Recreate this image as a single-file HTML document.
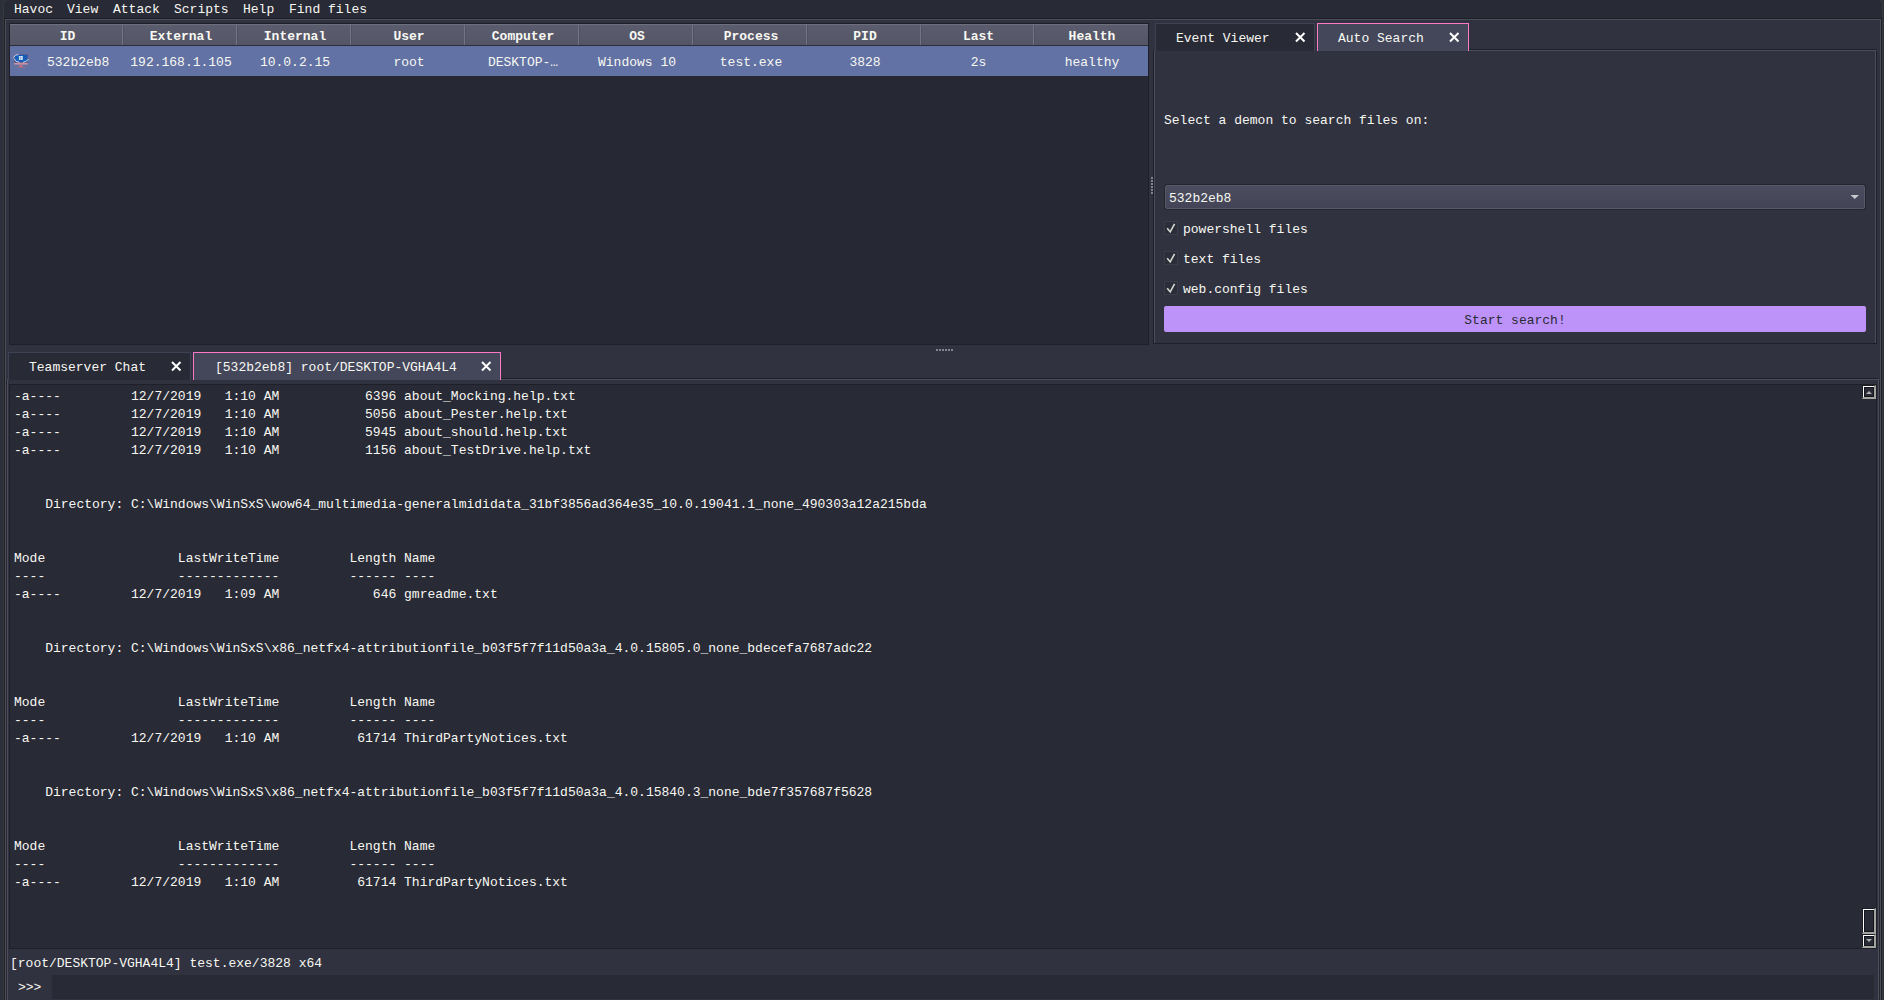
<!DOCTYPE html>
<html><head><meta charset="utf-8"><style>
html,body{margin:0;padding:0}
body{width:1884px;height:1000px;overflow:hidden;position:relative;background:#30323f}
body div{position:absolute}
.t{font-family:"Liberation Mono",monospace;font-size:13px;line-height:18px;white-space:pre}
</style></head><body>
<div style="left:0px;top:0px;width:3px;height:1000px;background:#2b303b;"></div>
<div style="left:1883px;top:0px;width:1px;height:1000px;background:#2b303b;"></div>
<div style="left:3px;top:0px;width:6px;height:6px;background:#2b303b;"></div>
<div style="left:1877px;top:0px;width:6px;height:6px;background:#2b303b;"></div>
<div style="left:3px;top:-1px;width:1880px;height:19px;background:#282a36;box-sizing:border-box;border:1px solid #36383e;border-bottom:none;border-radius:6px 6px 0 0"></div>
<div style="left:3px;top:18px;width:1px;height:982px;background:#36383e;"></div>
<div style="left:1882px;top:18px;width:1px;height:982px;background:#38393e;"></div>
<div style="left:4px;top:19px;width:1px;height:981px;background:#1f2028;"></div>
<div style="left:1881px;top:19px;width:1px;height:981px;background:#1f2028;"></div>
<div style="left:4px;top:18px;width:1878px;height:1px;background:#1d1e26;"></div>
<div class="t" style="left:14px;top:1px;color:#f8f8f2;">Havoc</div>
<div class="t" style="left:67px;top:1px;color:#f8f8f2;">View</div>
<div class="t" style="left:113px;top:1px;color:#f8f8f2;">Attack</div>
<div class="t" style="left:174px;top:1px;color:#f8f8f2;">Scripts</div>
<div class="t" style="left:243px;top:1px;color:#f8f8f2;">Help</div>
<div class="t" style="left:289px;top:1px;color:#f8f8f2;">Find files</div>
<div style="left:5px;top:19px;width:1876px;height:1px;background:#4c4d5b;"></div>
<div style="left:5px;top:19px;width:1px;height:981px;background:#4c4d5b;"></div>
<div style="left:1880px;top:19px;width:1px;height:981px;background:#4c4d5b;"></div>
<div style="left:9px;top:23px;width:1140px;height:322px;background:#1e1f28;"></div>
<div style="left:10px;top:24px;width:1138px;height:320px;background:#262833;"></div>
<div style="left:10px;top:24px;width:1138px;height:1px;background:#6e6f7d;"></div>
<div style="left:10px;top:25px;width:1138px;height:20px;background:linear-gradient(#5b5c6d,#545567);"></div>
<div style="left:10px;top:45px;width:1138px;height:1px;background:#2d2e3a;"></div>
<div style="left:122px;top:25px;width:1px;height:20px;background:#747584;"></div>
<div style="left:123px;top:25px;width:1px;height:20px;background:#4f5061;"></div>
<div style="left:236px;top:25px;width:1px;height:20px;background:#747584;"></div>
<div style="left:237px;top:25px;width:1px;height:20px;background:#4f5061;"></div>
<div style="left:350px;top:25px;width:1px;height:20px;background:#747584;"></div>
<div style="left:351px;top:25px;width:1px;height:20px;background:#4f5061;"></div>
<div style="left:464px;top:25px;width:1px;height:20px;background:#747584;"></div>
<div style="left:465px;top:25px;width:1px;height:20px;background:#4f5061;"></div>
<div style="left:578px;top:25px;width:1px;height:20px;background:#747584;"></div>
<div style="left:579px;top:25px;width:1px;height:20px;background:#4f5061;"></div>
<div style="left:692px;top:25px;width:1px;height:20px;background:#747584;"></div>
<div style="left:693px;top:25px;width:1px;height:20px;background:#4f5061;"></div>
<div style="left:806px;top:25px;width:1px;height:20px;background:#747584;"></div>
<div style="left:807px;top:25px;width:1px;height:20px;background:#4f5061;"></div>
<div style="left:920px;top:25px;width:1px;height:20px;background:#747584;"></div>
<div style="left:921px;top:25px;width:1px;height:20px;background:#4f5061;"></div>
<div style="left:1033px;top:25px;width:1px;height:20px;background:#747584;"></div>
<div style="left:1034px;top:25px;width:1px;height:20px;background:#4f5061;"></div>
<div style="left:10px;top:46px;width:1138px;height:30px;background:#6272a4;"></div>
<div class="t" style="left:11px;top:28px;width:113px;text-align:center;color:#f8f8f2;font-weight:bold">ID</div>
<div class="t" style="left:47px;top:54px;color:#f8f8f2;">532b2eb8</div>
<div class="t" style="left:124px;top:28px;width:114px;text-align:center;color:#f8f8f2;font-weight:bold">External</div>
<div class="t" style="left:124px;top:54px;width:114px;text-align:center;color:#f8f8f2;">192.168.1.105</div>
<div class="t" style="left:238px;top:28px;width:114px;text-align:center;color:#f8f8f2;font-weight:bold">Internal</div>
<div class="t" style="left:238px;top:54px;width:114px;text-align:center;color:#f8f8f2;">10.0.2.15</div>
<div class="t" style="left:352px;top:28px;width:114px;text-align:center;color:#f8f8f2;font-weight:bold">User</div>
<div class="t" style="left:352px;top:54px;width:114px;text-align:center;color:#f8f8f2;">root</div>
<div class="t" style="left:466px;top:28px;width:114px;text-align:center;color:#f8f8f2;font-weight:bold">Computer</div>
<div class="t" style="left:466px;top:54px;width:114px;text-align:center;color:#f8f8f2;">DESKTOP-…</div>
<div class="t" style="left:580px;top:28px;width:114px;text-align:center;color:#f8f8f2;font-weight:bold">OS</div>
<div class="t" style="left:580px;top:54px;width:114px;text-align:center;color:#f8f8f2;">Windows 10</div>
<div class="t" style="left:694px;top:28px;width:114px;text-align:center;color:#f8f8f2;font-weight:bold">Process</div>
<div class="t" style="left:694px;top:54px;width:114px;text-align:center;color:#f8f8f2;">test.exe</div>
<div class="t" style="left:808px;top:28px;width:114px;text-align:center;color:#f8f8f2;font-weight:bold">PID</div>
<div class="t" style="left:808px;top:54px;width:114px;text-align:center;color:#f8f8f2;">3828</div>
<div class="t" style="left:922px;top:28px;width:113px;text-align:center;color:#f8f8f2;font-weight:bold">Last</div>
<div class="t" style="left:922px;top:54px;width:113px;text-align:center;color:#f8f8f2;">2s</div>
<div class="t" style="left:1035px;top:28px;width:114px;text-align:center;color:#f8f8f2;font-weight:bold">Health</div>
<div class="t" style="left:1035px;top:54px;width:114px;text-align:center;color:#f8f8f2;">healthy</div>
<svg style="position:absolute;left:13px;top:53px" width="17" height="16" viewBox="0 0 17 16">
<rect x="1.3" y="1.3" width="13.6" height="8" fill="#175cb6" stroke="#8a5a78" stroke-width="0.5"/>
<rect x="5.9" y="3" width="1.8" height="1.8" fill="#dcecf8"/><rect x="8" y="3" width="1.8" height="1.8" fill="#dcecf8"/>
<rect x="5.9" y="5.1" width="1.8" height="1.8" fill="#dcecf8"/><rect x="8" y="5.1" width="1.8" height="1.8" fill="#dcecf8"/>
<path d="M0.6 4.6 Q1.5 1.2 5.5 1.6 M1.2 5.6 Q2.2 9 6.5 9.3 M10 9.4 Q13 8.6 15.6 6.4" stroke="#eef4ff" stroke-width="0.8" fill="none"/>
<rect x="1.2" y="10" width="13.6" height="1.6" fill="#c9919f"/>
<rect x="6.3" y="12.2" width="3.3" height="1.8" fill="#c27282"/>
<rect x="4" y="14.2" width="8.8" height="0.7" fill="#a86a80"/>
</svg>
<div style="left:1151px;top:177px;width:2px;height:2px;background:#84838f;"></div>
<div style="left:1151px;top:180px;width:2px;height:2px;background:#84838f;"></div>
<div style="left:1151px;top:183px;width:2px;height:2px;background:#84838f;"></div>
<div style="left:1151px;top:186px;width:2px;height:2px;background:#84838f;"></div>
<div style="left:1151px;top:189px;width:2px;height:2px;background:#84838f;"></div>
<div style="left:1151px;top:192px;width:2px;height:2px;background:#84838f;"></div>
<div style="left:1469px;top:49px;width:408px;height:1px;background:#1e1f28;"></div>
<div style="left:1469px;top:50px;width:407px;height:1px;background:#4c4d5b;"></div>
<div style="left:1153px;top:51px;width:1px;height:293px;background:#1e1f28;"></div>
<div style="left:1154px;top:51px;width:1px;height:292px;background:#4c4d5b;"></div>
<div style="left:1875px;top:51px;width:1px;height:292px;background:#4c4d5b;"></div>
<div style="left:1876px;top:51px;width:1px;height:293px;background:#1e1f28;"></div>
<div style="left:1153px;top:343px;width:724px;height:1px;background:#1e1f28;"></div>
<div style="left:1155px;top:23px;width:160px;height:28px;background:#3e4053;"></div>
<div style="left:1156px;top:24px;width:158px;height:27px;background:#282a36;"></div>
<div style="left:1317px;top:23px;width:152px;height:28px;background:#ff79c6;"></div>
<div style="left:1318px;top:24px;width:150px;height:27px;background:#44475a;"></div>
<div class="t" style="left:1176px;top:30px;color:#f8f8f2;">Event Viewer</div>
<div class="t" style="left:1338px;top:30px;color:#f8f8f2;">Auto Search</div>
<svg style="position:absolute;left:1295px;top:32px" width="11" height="11" viewBox="0 0 11 11"><path d="M1 1L9.5 9.5M9.5 1L1 9.5" stroke="#ffffff" stroke-width="2"/></svg>
<svg style="position:absolute;left:1449px;top:32px" width="11" height="11" viewBox="0 0 11 11"><path d="M1 1L9.5 9.5M9.5 1L1 9.5" stroke="#ffffff" stroke-width="2"/></svg>
<div class="t" style="left:1164px;top:112px;color:#f8f8f2;">Select a demon to search files on:</div>
<div style="left:1164px;top:184px;width:702px;height:26px;box-sizing:border-box;border:1px solid #24252e;border-radius:3px;background:#24252e"><div style="left:0;top:0;right:0;bottom:0;border:1px solid #575969;border-radius:2px;background:linear-gradient(#4b4d5e,#434556)"></div></div>
<div class="t" style="left:1169px;top:190px;color:#f8f8f2;">532b2eb8</div>
<svg style="position:absolute;left:1850px;top:194px" width="10" height="6" viewBox="0 0 10 6"><path d="M0.5 1L9 1L4.75 5Z" fill="#c8c8cc"/></svg>
<svg style="position:absolute;left:1164px;top:221px" width="14" height="14" viewBox="0 0 14 14"><rect x="0.5" y="0.5" width="13" height="13" fill="#2b2d39" stroke="#3a3c49"/><path d="M3.2 7.2L6.2 10.9L10.6 2.8" stroke="#d6d6d0" stroke-width="1.6" fill="none"/></svg>
<div class="t" style="left:1183px;top:221px;color:#f8f8f2;">powershell files</div>
<svg style="position:absolute;left:1164px;top:251px" width="14" height="14" viewBox="0 0 14 14"><rect x="0.5" y="0.5" width="13" height="13" fill="#2b2d39" stroke="#3a3c49"/><path d="M3.2 7.2L6.2 10.9L10.6 2.8" stroke="#d6d6d0" stroke-width="1.6" fill="none"/></svg>
<div class="t" style="left:1183px;top:251px;color:#f8f8f2;">text files</div>
<svg style="position:absolute;left:1164px;top:281px" width="14" height="14" viewBox="0 0 14 14"><rect x="0.5" y="0.5" width="13" height="13" fill="#2b2d39" stroke="#3a3c49"/><path d="M3.2 7.2L6.2 10.9L10.6 2.8" stroke="#d6d6d0" stroke-width="1.6" fill="none"/></svg>
<div class="t" style="left:1183px;top:281px;color:#f8f8f2;">web.config files</div>
<div style="left:1164px;top:306px;width:702px;height:26px;background:#bd93f9;border-radius:2px"></div>
<div class="t" style="left:1164px;top:312px;width:702px;text-align:center;color:#282a36;">Start search!</div>
<div style="left:936px;top:349px;width:2px;height:2px;background:#84838f;"></div>
<div style="left:939px;top:349px;width:2px;height:2px;background:#84838f;"></div>
<div style="left:942px;top:349px;width:2px;height:2px;background:#84838f;"></div>
<div style="left:945px;top:349px;width:2px;height:2px;background:#84838f;"></div>
<div style="left:948px;top:349px;width:2px;height:2px;background:#84838f;"></div>
<div style="left:951px;top:349px;width:2px;height:2px;background:#84838f;"></div>
<div style="left:501px;top:378px;width:1377px;height:1px;background:#1e1f28;"></div>
<div style="left:501px;top:379px;width:1378px;height:1px;background:#4c4d5b;"></div>
<div style="left:7px;top:379px;width:1px;height:1px;background:#4c4d5b;"></div>
<div style="left:7px;top:380px;width:1px;height:620px;background:#4c4d5b;"></div>
<div style="left:6px;top:380px;width:1px;height:620px;background:#25262e;"></div>
<div style="left:1878px;top:380px;width:1px;height:620px;background:#4c4d5b;"></div>
<div style="left:1879px;top:380px;width:1px;height:620px;background:#25262e;"></div>
<div style="left:8px;top:352px;width:183px;height:28px;background:#3e4053;"></div>
<div style="left:9px;top:353px;width:181px;height:27px;background:#282a36;"></div>
<div style="left:193px;top:352px;width:308px;height:28px;background:#ff79c6;"></div>
<div style="left:194px;top:353px;width:306px;height:27px;background:#44475a;"></div>
<div class="t" style="left:29px;top:359px;color:#f8f8f2;">Teamserver Chat</div>
<div class="t" style="left:215px;top:359px;color:#f8f8f2;">[532b2eb8] root/DESKTOP-VGHA4L4</div>
<svg style="position:absolute;left:171px;top:361px" width="11" height="11" viewBox="0 0 11 11"><path d="M1 1L9.5 9.5M9.5 1L1 9.5" stroke="#ffffff" stroke-width="2"/></svg>
<svg style="position:absolute;left:481px;top:361px" width="11" height="11" viewBox="0 0 11 11"><path d="M1 1L9.5 9.5M9.5 1L1 9.5" stroke="#ffffff" stroke-width="2"/></svg>
<div style="left:9px;top:384px;width:1868px;height:565px;background:#1e1f28;"></div>
<div style="left:10px;top:385px;width:1866px;height:563px;background:#282a36;"></div>
<div class="t" style="left:14px;top:388px;color:#f8f8f2">-a----         12/7/2019   1:10 AM           6396 about_Mocking.help.txt
-a----         12/7/2019   1:10 AM           5056 about_Pester.help.txt
-a----         12/7/2019   1:10 AM           5945 about_should.help.txt
-a----         12/7/2019   1:10 AM           1156 about_TestDrive.help.txt


    Directory: C:\Windows\WinSxS\wow64_multimedia-generalmididata_31bf3856ad364e35_10.0.19041.1_none_490303a12a215bda


Mode                 LastWriteTime         Length Name
----                 -------------         ------ ----
-a----         12/7/2019   1:09 AM            646 gmreadme.txt


    Directory: C:\Windows\WinSxS\x86_netfx4-attributionfile_b03f5f7f11d50a3a_4.0.15805.0_none_bdecefa7687adc22


Mode                 LastWriteTime         Length Name
----                 -------------         ------ ----
-a----         12/7/2019   1:10 AM          61714 ThirdPartyNotices.txt


    Directory: C:\Windows\WinSxS\x86_netfx4-attributionfile_b03f5f7f11d50a3a_4.0.15840.3_none_bde7f357687f5628


Mode                 LastWriteTime         Length Name
----                 -------------         ------ ----
-a----         12/7/2019   1:10 AM          61714 ThirdPartyNotices.txt</div>
<div style="left:1862px;top:385px;width:14px;height:14px;box-sizing:border-box;border-style:solid;border-width:1px 2px 2px 1px;border-color:#1a1b24 #a3a39f #a3a39f #1a1b24;background:#282a36"><div style="left:0;top:0;right:0;bottom:0;border-style:solid;border-width:1px 0 0 1px;border-color:#ffffff"><div style="left:0;top:0;right:0;bottom:0;border:1px solid #14151e"></div></div></div>
<svg style="position:absolute;left:1866px;top:391px" width="6" height="4" viewBox="0 0 6 4"><path d="M0 3L3 0L6 3Z" fill="#aeaeaa"/></svg>
<div style="left:1862px;top:908px;width:14px;height:26px;box-sizing:border-box;border-style:solid;border-width:1px 2px 2px 1px;border-color:#1a1b24 #a3a39f #a3a39f #1a1b24;background:#282a36"><div style="left:0;top:0;right:0;bottom:0;border-style:solid;border-width:1px 0 0 1px;border-color:#ffffff"><div style="left:0;top:0;right:0;bottom:0;border:1px solid #14151e"></div></div></div>
<div style="left:1862px;top:934px;width:14px;height:14px;box-sizing:border-box;border-style:solid;border-width:1px 2px 2px 1px;border-color:#1a1b24 #a3a39f #a3a39f #1a1b24;background:#282a36"><div style="left:0;top:0;right:0;bottom:0;border-style:solid;border-width:1px 0 0 1px;border-color:#ffffff"><div style="left:0;top:0;right:0;bottom:0;border:1px solid #14151e"></div></div></div>
<svg style="position:absolute;left:1866px;top:939px" width="6" height="4" viewBox="0 0 6 4"><path d="M0 0L3 3L6 0Z" fill="#aeaeaa"/></svg>
<div class="t" style="left:10px;top:955px;color:#f8f8f2;">[root/DESKTOP-VGHA4L4] test.exe/3828 x64</div>
<div class="t" style="left:18px;top:979px;color:#f8f8f2;">&gt;&gt;&gt;</div>
<div style="left:52px;top:975px;width:1822px;height:24px;background:#282a36;"></div>
</body></html>
